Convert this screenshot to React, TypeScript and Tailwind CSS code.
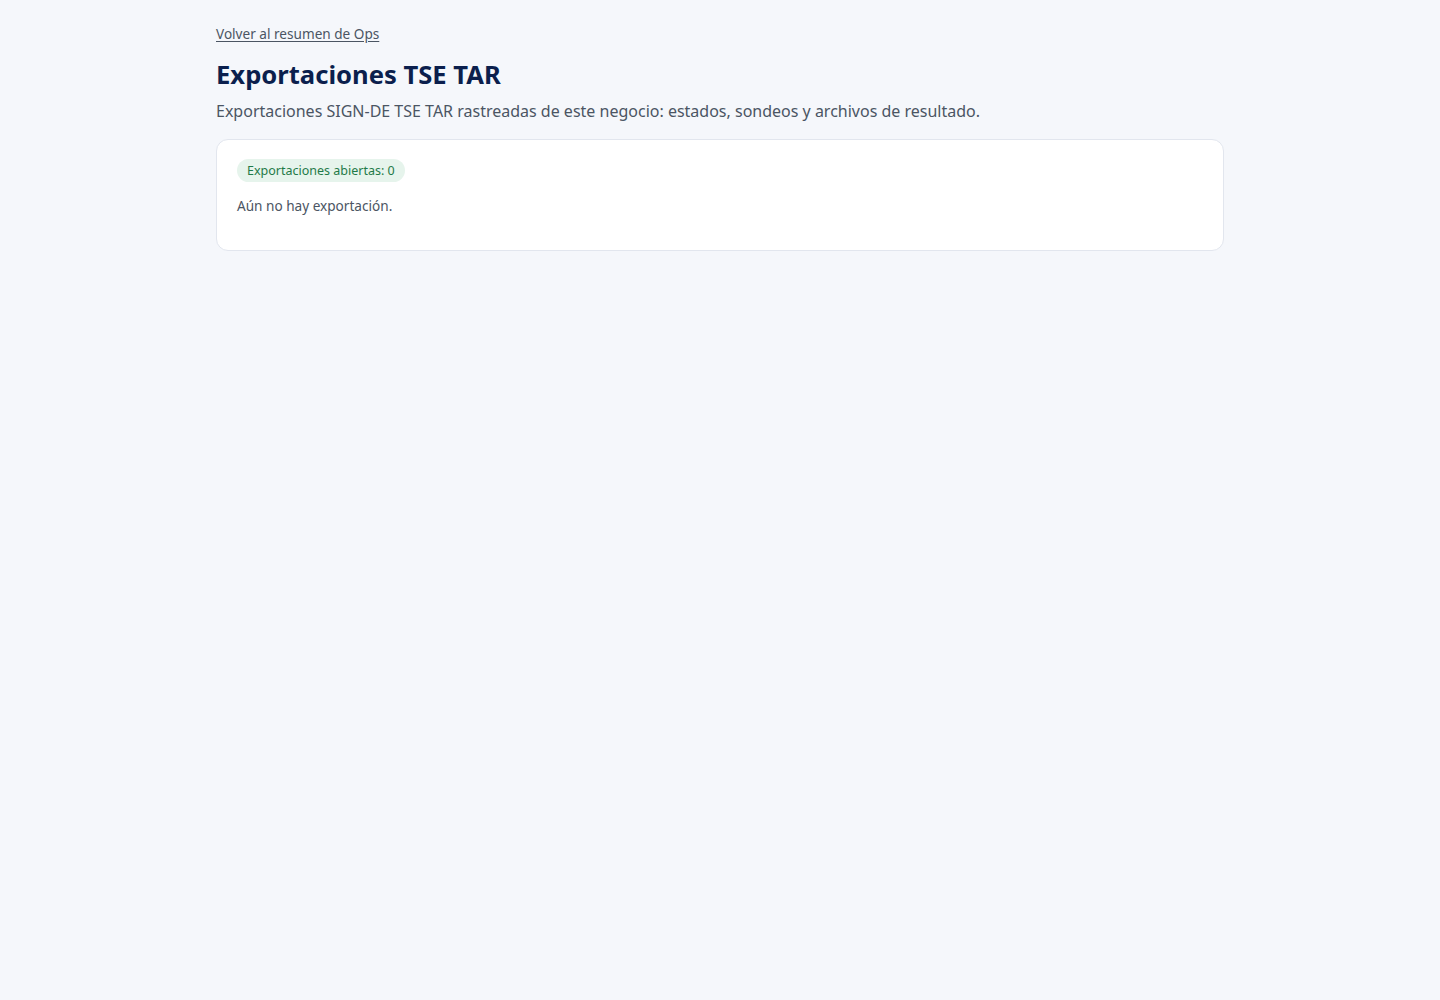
export default function App() {
  return (
    <div className="min-h-screen bg-[#f5f7fb] font-['Noto_Sans',sans-serif]">
      <div className="mx-auto max-w-[1008px] pt-[21px]">
        <a href="#" className="text-[13.6px] leading-5 text-[#4b5563] underline underline-offset-2">
          Volver al resumen de Ops
        </a>

        <h1 className="mt-3 text-[25.6px] leading-9 font-bold text-[#0b1f4d]">Exportaciones TSE TAR</h1>
        <p className="mt-[6px] text-base leading-6 text-[#4b5563]">
          Exportaciones SIGN-DE TSE TAR rastreadas de este negocio: estados, sondeos y archivos de resultado.
        </p>

        <div className="mt-4 rounded-xl border border-[#e2e6ee] bg-white px-5 pt-[17px] pb-[34px]">
          <span className="inline-flex items-center rounded-full bg-[#e6f4ec] px-2.5 py-[3px] text-[12.5px] leading-[17px] text-[#1f7a48]">
            Exportaciones abiertas: 0
          </span>
          <p className="mt-[14px] text-[13.6px] leading-5 text-[#4b5563]">Aún no hay exportación.</p>
        </div>
      </div>
    </div>
  );
}
